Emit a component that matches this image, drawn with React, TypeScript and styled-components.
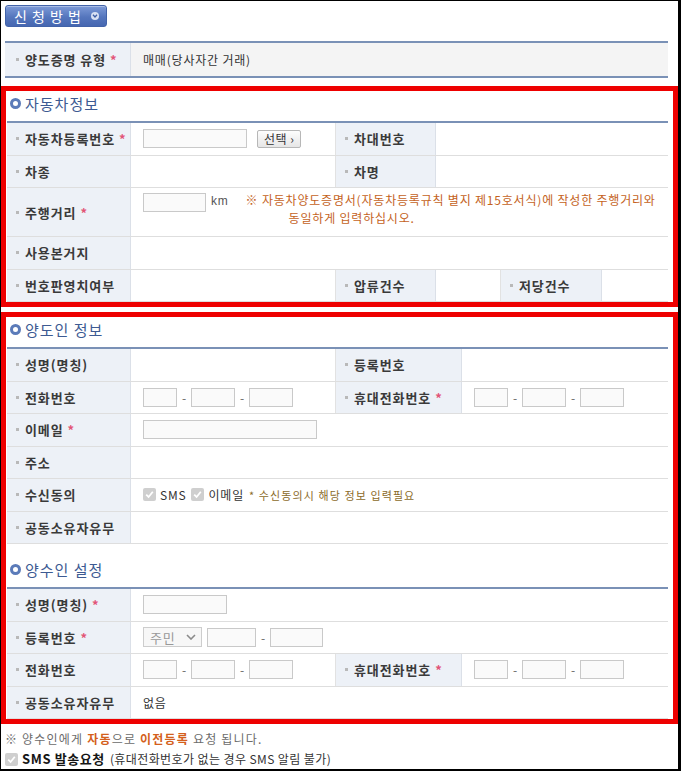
import type { FC, ReactNode } from "react";
import { createGlobalStyle, styled } from "styled-components";

const FULL = "124px 1fr";
const SPLIT = "124px 205px 100px 1fr";
const SPLIT_WIDE = "124px 205px 126px 1fr";
const TRIPLE = "124px 205px 100px 65px 101px 1fr";

const GlobalStyle = createGlobalStyle`
  html, body {
    margin: 0;
    padding: 0;
    background: #fff;
  }
  body {
    font-family: "Liberation Sans", "Noto Sans CJK KR", sans-serif;
    font-size: 12px;
    color: #333;
  }
`;

const Frame = styled.div`
  width: 681px;
  height: 771px;
  box-sizing: border-box;
  border-style: solid;
  border-color: #000;
  border-width: 1px 3px 2px 1px;
  overflow: hidden;
  background: #fff;
`;

const MethodButton = styled.div`
  display: flex;
  align-items: center;
  width: 102px;
  height: 22px;
  box-sizing: border-box;
  margin: 4px 0 0 4px;
  padding-left: 8px;
  border: 1px solid #4263a9;
  border-radius: 3px;
  background: linear-gradient(#7e9bd8, #5576bd 55%, #4667b1);
  box-shadow: inset 0 1px 0 rgba(255, 255, 255, 0.35);
  color: #fff;
  font-family: "Noto Sans CJK KR", sans-serif;
  font-size: 14px;
  letter-spacing: 1px;
  line-height: 20px;
`;

const MethodCaret = styled.span`
  display: flex;
  align-items: center;
  justify-content: center;
  width: 8px;
  height: 8px;
  margin: 0 7px 0 auto;
  border-radius: 50%;
  background: #d9e1f3;
`;

const TypeTable = styled.div`
  display: grid;
  grid-template-columns: 126px 1fr;
  height: 37px;
  box-sizing: border-box;
  margin: 14px 10px 0 4px;
  border-top: 2px solid #7a91b6;
  border-bottom: 2px solid #7a91b6;
`;

const RedBox = styled.section<{ $gap: number }>`
  margin-top: ${({ $gap }) => $gap}px;
  padding: 0 5px 0 1px;
  border: 5px solid #ee0000;
`;

const SectionTitle = styled.h3<{ $gap?: number }>`
  display: flex;
  align-items: center;
  gap: 4px;
  height: 30px;
  box-sizing: border-box;
  margin: ${({ $gap }) => $gap ?? 0}px 0 0;
  padding: 0 0 6px 3px;
  font-family: "Noto Sans CJK KR", sans-serif;
  font-size: 15px;
  font-weight: normal;
  letter-spacing: 1px;
  color: #3d5a92;
`;

const Ring = styled.span`
  width: 11px;
  height: 11px;
  box-sizing: border-box;
  border: 3px solid #5b7bb9;
  border-radius: 50%;
  background: #fff;
`;

const Table = styled.div`
  border-top: 2px solid #7a91b6;
`;

const Row = styled.div<{ $cols: string; $tall?: boolean }>`
  display: grid;
  grid-template-columns: ${({ $cols }) => $cols};
  height: ${({ $tall }) => ($tall ? "49px" : "32.5px")};
  box-sizing: border-box;
  border-bottom: 1px solid #dedede;
`;

const Label = styled.div<{ $pad?: number }>`
  display: flex;
  align-items: center;
  padding-left: ${({ $pad }) => $pad ?? 9}px;
  background: #edf1f7;
  border-right: 1px solid #dbe0e8;
  font-family: "Noto Sans CJK KR", sans-serif;
  font-size: 13px;
  font-weight: bold;
  letter-spacing: 0.9px;
  color: #3a3a3a;
  white-space: nowrap;

  &::before {
    content: "";
    width: 3px;
    height: 3px;
    margin-right: 6px;
    background: #b9b9b9;
  }
`;

const Required = styled.span`
  margin-left: 4px;
  color: #e25577;
`;

const Value = styled.div<{ $bg?: string; $top?: boolean }>`
  display: flex;
  align-items: ${({ $top }) => ($top ? "flex-start" : "center")};
  padding: ${({ $top }) => ($top ? "5px 0 0 12px" : "0 0 0 12px")};
  background: ${({ $bg }) => $bg ?? "#fff"};
  border-right: 1px solid #e2e2e2;
  font-family: "Noto Sans CJK KR", sans-serif;
  font-size: 12px;
  letter-spacing: 0.8px;
  color: #333;
  white-space: nowrap;

  &:last-child {
    border-right: 0;
  }
`;

const TextInput = styled.input<{ $w: number }>`
  width: ${({ $w }) => $w}px;
  height: 19px;
  box-sizing: border-box;
  margin: 0;
  padding: 0;
  border: 1px solid #c9c9c9;
  background: #fafafa;
`;

const Dash = styled.span`
  width: 14px;
  text-align: center;
  letter-spacing: 0;
  color: #666;
`;

const PickButton = styled.button`
  height: 18px;
  margin-left: 10px;
  padding: 0 6px;
  border: 1px solid #b7b7b7;
  border-radius: 2px;
  background: linear-gradient(#fdfdfd, #e6e6e6);
  font-family: "Noto Sans CJK KR", sans-serif;
  font-size: 12px;
  letter-spacing: 0.5px;
  line-height: 16px;
  color: #333;
`;

const Unit = styled.span`
  margin: 1px 0 0 5px;
  font-family: "Liberation Sans", sans-serif;
  color: #555;
`;

const Note = styled.div`
  display: flex;
  flex-direction: column;
  margin: -2px 0 0 17px;
  line-height: 18px;
  letter-spacing: 0.8px;
  color: #c4621c;
`;

const NoteIndent = styled.span`
  padding-left: 43px;
`;

const Box = styled.span<{ $gap?: number }>`
  display: inline-flex;
  align-items: center;
  justify-content: center;
  width: 13px;
  height: 13px;
  margin: 0 4px 0 ${({ $gap }) => $gap ?? 0}px;
  border-radius: 2px;
  background: #cfcfcf;
`;

const Hint = styled.span`
  margin-left: 5px;
  font-size: 11px;
  letter-spacing: 1.1px;
  color: #8b6b2a;
`;

const FakeSelect = styled.span`
  display: flex;
  align-items: center;
  justify-content: space-between;
  width: 59px;
  height: 20px;
  box-sizing: border-box;
  margin-right: 5px;
  padding: 0 5px 0 6px;
  border: 1px solid #cdcdcd;
  background: #f7f7f7;
  font-size: 13px;
  color: #999;
`;

const Notes = styled.div`
  padding: 5px 0 0 4px;
  font-family: "Noto Sans CJK KR", sans-serif;
  font-size: 12px;
  line-height: 20px;
  color: #6b6b6b;
`;

const NoteLine = styled.div<{ $spacing?: number }>`
  display: flex;
  align-items: center;
  white-space: pre;
  letter-spacing: ${({ $spacing }) => $spacing ?? 0}px;
`;

const Accent = styled.b`
  color: #d45f1c;
`;

const Strong = styled.b`
  margin-right: 5px;
  font-size: 13px;
  letter-spacing: 0.6px;
  color: #151515;
`;

const Plain = styled.span`
  letter-spacing: 0.4px;
  color: #333;
`;

const Check: FC<{ gap?: number }> = ({ gap }) => (
  <Box $gap={gap}>
    <svg width="9" height="9" viewBox="0 0 9 9">
      <path d="M1.2 4.6 L3.6 7 L7.8 1.8" fill="none" stroke="#fff" strokeWidth="1.8" />
    </svg>
  </Box>
);

const Phone: FC = () => (
  <>
    <TextInput $w={34} />
    <Dash>-</Dash>
    <TextInput $w={44} />
    <Dash>-</Dash>
    <TextInput $w={44} />
  </>
);

const Title: FC<{ gap?: number; children: ReactNode }> = ({ gap, children }) => (
  <SectionTitle $gap={gap}>
    <Ring />
    {children}
  </SectionTitle>
);

const Req = () => <Required>*</Required>;

export default function App() {
  return (
    <>
      <GlobalStyle />
      <Frame>
        <MethodButton>
          신 청 방 법
          <MethodCaret>
            <svg width="6" height="4" viewBox="0 0 6 4">
              <path d="M1 0.8 L3 3 L5 0.8" fill="none" stroke="#3f5fa6" strokeWidth="1.3" />
            </svg>
          </MethodCaret>
        </MethodButton>

        <TypeTable>
          <Label $pad={11}>
            양도증명 유형<Req />
          </Label>
          <Value $bg="#f4f4f4">매매(당사자간 거래)</Value>
        </TypeTable>

        <RedBox $gap={8}>
          <Title>자동차정보</Title>
          <Table>
            <Row $cols={SPLIT}>
              <Label>
                자동차등록번호<Req />
              </Label>
              <Value>
                <TextInput $w={104} />
                <PickButton>선택 ›</PickButton>
              </Value>
              <Label>차대번호</Label>
              <Value />
            </Row>
            <Row $cols={SPLIT}>
              <Label>차종</Label>
              <Value />
              <Label>차명</Label>
              <Value />
            </Row>
            <Row $cols={FULL} $tall>
              <Label>
                주행거리<Req />
              </Label>
              <Value $top>
                <TextInput $w={63} />
                <Unit>km</Unit>
                <Note>
                  <span>※ 자동차양도증명서(자동차등록규칙 별지 제15호서식)에 작성한 주행거리와</span>
                  <NoteIndent>동일하게 입력하십시오.</NoteIndent>
                </Note>
              </Value>
            </Row>
            <Row $cols={FULL}>
              <Label>사용본거지</Label>
              <Value />
            </Row>
            <Row $cols={TRIPLE}>
              <Label>번호판영치여부</Label>
              <Value />
              <Label>압류건수</Label>
              <Value />
              <Label>저당건수</Label>
              <Value />
            </Row>
          </Table>
        </RedBox>

        <RedBox $gap={5}>
          <Title>양도인 정보</Title>
          <Table>
            <Row $cols={SPLIT_WIDE}>
              <Label>성명(명칭)</Label>
              <Value />
              <Label>등록번호</Label>
              <Value />
            </Row>
            <Row $cols={SPLIT_WIDE}>
              <Label>전화번호</Label>
              <Value>
                <Phone />
              </Value>
              <Label>
                휴대전화번호<Req />
              </Label>
              <Value>
                <Phone />
              </Value>
            </Row>
            <Row $cols={FULL}>
              <Label>
                이메일<Req />
              </Label>
              <Value>
                <TextInput $w={174} />
              </Value>
            </Row>
            <Row $cols={FULL}>
              <Label>주소</Label>
              <Value />
            </Row>
            <Row $cols={FULL}>
              <Label>수신동의</Label>
              <Value>
                <Check />
                <span>SMS</span>
                <Check gap={5} />
                <span>이메일</span>
                <Hint>* 수신동의시 해당 정보 입력필요</Hint>
              </Value>
            </Row>
            <Row $cols={FULL}>
              <Label>공동소유자유무</Label>
              <Value />
            </Row>
          </Table>

          <Title gap={13}>양수인 설정</Title>
          <Table>
            <Row $cols={FULL}>
              <Label>
                성명(명칭)<Req />
              </Label>
              <Value>
                <TextInput $w={84} />
              </Value>
            </Row>
            <Row $cols={FULL}>
              <Label>
                등록번호<Req />
              </Label>
              <Value>
                <FakeSelect>
                  주민
                  <svg width="10" height="6" viewBox="0 0 10 6">
                    <path d="M1 1 L5 5 L9 1" fill="none" stroke="#8a8a8a" strokeWidth="1.6" />
                  </svg>
                </FakeSelect>
                <TextInput $w={49} />
                <Dash>-</Dash>
                <TextInput $w={53} />
              </Value>
            </Row>
            <Row $cols={SPLIT_WIDE}>
              <Label>전화번호</Label>
              <Value>
                <Phone />
              </Value>
              <Label>
                휴대전화번호<Req />
              </Label>
              <Value>
                <Phone />
              </Value>
            </Row>
            <Row $cols={FULL}>
              <Label>공동소유자유무</Label>
              <Value>없음</Value>
            </Row>
          </Table>
        </RedBox>

        <Notes>
          <NoteLine $spacing={1.2}>
            ※ 양수인에게 <Accent>자동</Accent>으로 <Accent>이전등록</Accent> 요청 됩니다.
          </NoteLine>
          <NoteLine>
            <Check />
            <Strong>SMS 발송요청</Strong>
            <Plain>(휴대전화번호가 없는 경우 SMS 알림 불가)</Plain>
          </NoteLine>
        </Notes>
      </Frame>
    </>
  );
}
